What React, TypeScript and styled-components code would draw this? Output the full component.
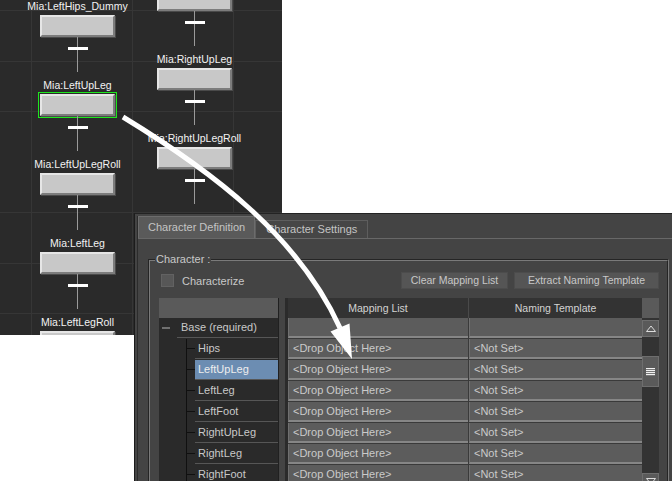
import React from 'react';
import styled, { createGlobalStyle } from 'styled-components';

const GlobalStyle = createGlobalStyle`
  html, body { margin: 0; padding: 0; background: #fff; }
  body { font-family: 'Liberation Sans', Arial, sans-serif; }
`;

type GraphNode = { name?: string; selected?: boolean };

const leftChain: GraphNode[] = [
  { name: 'Mia:LeftHips_Dummy' },
  { name: 'Mia:LeftUpLeg', selected: true },
  { name: 'Mia:LeftUpLegRoll' },
  { name: 'Mia:LeftLeg' },
  { name: 'Mia:LeftLegRoll' },
];

// the first right node's label is above the picture, only its box shows
const rightChain: GraphNode[] = [
  {},
  { name: 'Mia:RightUpLeg' },
  { name: 'Mia:RightUpLegRoll' },
  { name: 'Mia:RightLeg' },
];

const slots = ['Hips', 'LeftUpLeg', 'LeftLeg', 'LeftFoot', 'RightUpLeg', 'RightLeg', 'RightFoot'];
const selectedSlot = 'LeftUpLeg';

const App: React.FC = () => {
  const renderChain = (chain: GraphNode[], left: number, top: number) => (
    <Chain $left={left} $top={top}>
      {chain.map((node, i) => (
        <React.Fragment key={i}>
          {node.name ? <NodeLabel>{node.name}</NodeLabel> : null}
          <NodeBox $selected={!!node.selected} />
          <Stem />
        </React.Fragment>
      ))}
    </Chain>
  );

  return (
    <>
      <GlobalStyle />
      <Stage>
        <Graph>
          {renderChain(leftChain, 40, 0)}
          {renderChain(rightChain, 157, -11)}
        </Graph>

        <Panel>
          <Frame>
            <TabBar>
              <Tab $active>Character Definition</Tab>
              <Tab>Character Settings</Tab>
            </TabBar>
            <Body>
              <Group>
                <Legend>Character :</Legend>
                <TopRow>
                  <Check />
                  <span>Characterize</span>
                  <Spacer />
                  <Button $w={107}>Clear Mapping List</Button>
                  <Button $w={145}>Extract Naming Template</Button>
                </TopRow>
                <MainArea>
                  <Tree>
                    <TreeHead />
                    <TreeRow>
                      <Minus />
                      <TreeLabel $root>Base (required)</TreeLabel>
                    </TreeRow>
                    {slots.map((slot) => (
                      <TreeRow key={slot}>
                        <Branch>
                          <Tick />
                        </Branch>
                        <TreeLabel $selected={slot === selectedSlot}>{slot}</TreeLabel>
                      </TreeRow>
                    ))}
                  </Tree>
                  <Table>
                    <Columns>
                      <HeadRow>
                        <HeadCell>Mapping List</HeadCell>
                        <HeadCell>Naming Template</HeadCell>
                      </HeadRow>
                      <Row>
                        <Cell />
                        <Cell />
                      </Row>
                      {slots.map((slot) => (
                        <Row key={slot}>
                          <Cell>&lt;Drop Object Here&gt;</Cell>
                          <Cell>&lt;Not Set&gt;</Cell>
                        </Row>
                      ))}
                    </Columns>
                    <ScrollBar>
                      <Corner />
                      <ScrollBtn>
                        <svg width="10" height="7" viewBox="0 0 10 7">
                          <polygon points="0.5,6.5 5,1 9.5,6.5" fill="none" stroke="#dcdcdc" strokeWidth="1" />
                        </svg>
                      </ScrollBtn>
                      <Track $h={19} />
                      <Thumb>
                        <svg width="9" height="8" viewBox="0 0 9 8">
                          {[0, 2, 4, 6].map((y) => (
                            <rect key={y} x="0" y={y} width="9" height="1.2" fill="#f0f0f0" />
                          ))}
                        </svg>
                      </Thumb>
                      <Track $h={86} />
                      <ScrollBtn>
                        <svg width="10" height="7" viewBox="0 0 10 7">
                          <polygon points="0.5,0.5 5,6 9.5,0.5" fill="none" stroke="#dcdcdc" strokeWidth="1" />
                        </svg>
                      </ScrollBtn>
                    </ScrollBar>
                  </Table>
                </MainArea>
              </Group>
            </Body>
          </Frame>
        </Panel>

        <Overlay width="672" height="481" viewBox="0 0 672 481">
          <path d="M123 117 C210 170 298 235 340 328" stroke="#fff" strokeWidth="5" fill="none" />
          <polygon points="352,359 349.5,323.5 330.5,331.5" fill="#fff" />
        </Overlay>
      </Stage>
    </>
  );
};

export default App;

const Stage = styled.div`
  position: relative;
  width: 672px;
  height: 481px;
  overflow: hidden;
  background: #fff;
  display: grid;
  grid-template-columns: 134px 148px 390px;
  grid-template-rows: 213px 122px 146px;
`;

const Graph = styled.div`
  grid-column: 1 / 3;
  grid-row: 1 / 3;
  position: relative;
  overflow: hidden;
  background-color: #2a2a2a;
  background-image:
    repeating-linear-gradient(to bottom, transparent 0 10px, #363636 10px 11px, transparent 11px 50.5px),
    repeating-linear-gradient(to right, transparent 0 31px, #363636 31px 32px, transparent 32px 101px);
`;

const Chain = styled.div<{ $left: number; $top: number }>`
  position: absolute;
  left: ${(p) => p.$left}px;
  top: ${(p) => p.$top}px;
  width: 75px;
  display: flex;
  flex-direction: column;
  align-items: center;
`;

const NodeLabel = styled.div`
  height: 13px;
  line-height: 13px;
  margin-bottom: 2px;
  font-size: 10.5px;
  color: #f2f2f2;
  white-space: nowrap;
`;

const NodeBox = styled.div<{ $selected: boolean }>`
  width: 75px;
  height: 22px;
  box-sizing: border-box;
  background: #c8c8c8;
  border: 2px solid;
  border-color: #e6e6e6 #7c7c7c #7c7c7c #e6e6e6;
  box-shadow: 1px 1px 0 #4a4a4a;
  outline: ${(p) => (p.$selected ? '1px solid #1de61d' : 'none')};
  outline-offset: 1px;
`;

const Stem = styled.div`
  width: 75px;
  height: 42px;
  background:
    linear-gradient(#fff, #fff) 28px 10px / 20px 3px no-repeat,
    linear-gradient(#9a9a9a, #9a9a9a) 37px 0 / 1px 35px no-repeat;
`;

const Panel = styled.div`
  grid-column: 2 / 4;
  grid-row: 2 / 4;
  z-index: 1;
  display: flex;
  overflow: hidden;
  background: #444;
  border-top: 1px solid #232323;
  border-left: 1px solid #1c1c1c;
  padding: 2px 0 0 2px;
  font-family: 'Liberation Sans', Arial, sans-serif;
  font-size: 11px;
  color: #c8c8c8;
`;

const Frame = styled.div`
  flex: 1;
  min-width: 0;
  display: flex;
  flex-direction: column;
  border-left: 1px solid #2c2c2c;
`;

const TabBar = styled.div`
  display: flex;
  align-items: flex-end;
  height: 22px;
  border-bottom: 1px solid #686868;
`;

const Tab = styled.div<{ $active?: boolean }>`
  box-sizing: border-box;
  height: ${(p) => (p.$active ? 22 : 18)}px;
  line-height: ${(p) => (p.$active ? 21 : 16)}px;
  padding: 0 ${(p) => (p.$active ? 9 : 10)}px;
  background: ${(p) => (p.$active ? '#5a5a5a' : '#464646')};
  border: 1px solid ${(p) => (p.$active ? '#6c6c6c' : '#5e5e5e')};
  border-bottom: none;
  color: #c4c4c4;
  white-space: nowrap;
`;

const Body = styled.div`
  flex: 1;
  padding: 14px 3px 0 10px;
  display: flex;
  flex-direction: column;
`;

const Group = styled.fieldset`
  flex: 1;
  margin: 0;
  padding: 0;
  min-width: 0;
  border: 2px groove #7a7a7a;
  border-bottom: none;
`;

const Legend = styled.legend`
  margin-left: 5px;
  padding: 0 1px;
  font-size: 11px;
  line-height: 13px;
  color: #c8c8c8;
`;

const TopRow = styled.div`
  margin-top: 6px;
  height: 17px;
  display: flex;
  align-items: center;
  padding: 0 8px 0 11px;
`;

const Check = styled.div`
  width: 13px;
  height: 13px;
  box-sizing: border-box;
  background: #575757;
  border: 1px solid #626262;
  margin-right: 8px;
`;

const Spacer = styled.div`
  flex: 1;
`;

const Button = styled.div<{ $w: number }>`
  width: ${(p) => p.$w}px;
  height: 17px;
  box-sizing: border-box;
  margin-left: 6px;
  background: #555;
  border: 1px solid #4c4c4c;
  font-size: 10.5px;
  line-height: 15px;
  text-align: center;
  color: #c8c8c8;
  white-space: nowrap;
`;

const MainArea = styled.div`
  margin-top: 9px;
  display: flex;
  padding: 0 8px 0 9px;
`;

const Tree = styled.div`
  width: 120px;
  height: 200px;
  box-sizing: border-box;
  margin-right: 6px;
  background: #2a2a2a;
  border-right: 1px solid #202020;
  display: flex;
  flex-direction: column;
`;

const TreeHead = styled.div`
  height: 20px;
  flex-shrink: 0;
  background: #5a5a5a;
`;

const TreeRow = styled.div`
  height: 21px;
  flex-shrink: 0;
  display: flex;
  align-items: flex-start;
  &:last-child > div:first-child {
    height: 200px;
  }
`;

const Minus = styled.div`
  width: 8px;
  height: 2px;
  margin: 9px 7px 0 3px;
  background: #707070;
`;

const Branch = styled.div`
  align-self: stretch;
  width: 8px;
  margin-left: 27px;
  border-left: 1px solid #101010;
  display: flex;
  align-items: flex-start;
`;

const Tick = styled.div`
  width: 8px;
  height: 1px;
  margin-top: 9px;
  background: #101010;
`;

const TreeLabel = styled.div<{ $root?: boolean; $selected?: boolean }>`
  flex: 1;
  height: 19px;
  line-height: 19px;
  padding-left: ${(p) => (p.$root ? 4 : 3)}px;
  border-bottom: 1px solid #565656;
  background: ${(p) => (p.$selected ? '#6c8db2' : 'transparent')};
  color: ${(p) => (p.$selected ? '#eeeeee' : '#c8c8c8')};
  white-space: nowrap;
`;

const Table = styled.div`
  width: 374px;
  height: 200px;
  box-sizing: border-box;
  border-left: 3px solid #2b2b2b;
  background: #3a3a3a;
  display: flex;
`;

const Columns = styled.div`
  width: 354px;
  display: flex;
  flex-direction: column;
`;

const HeadRow = styled.div`
  display: grid;
  grid-template-columns: 180px 173px;
  column-gap: 1px;
  background: #4a4a4a;
`;

const HeadCell = styled.div`
  height: 20px;
  line-height: 20px;
  background: #333;
  text-align: center;
  font-size: 10.5px;
  color: #d2d2d2;
`;

const Row = styled.div`
  display: grid;
  grid-template-columns: 180px 173px;
  column-gap: 1px;
  margin-bottom: 1px;
`;

const Cell = styled.div`
  height: 20px;
  box-sizing: border-box;
  line-height: 18px;
  padding-left: 4px;
  background: #5c5c5c;
  border-left: 1px solid #707070;
  border-bottom: 2px solid #868686;
  color: #cacaca;
  white-space: nowrap;
`;

const ScrollBar = styled.div`
  width: 17px;
  background: #333;
  display: flex;
  flex-direction: column;
`;

const Corner = styled.div`
  height: 20px;
  flex-shrink: 0;
  margin-bottom: 2px;
  background: #5a5a5a;
`;

const ScrollBtn = styled.div`
  height: 17px;
  flex-shrink: 0;
  box-sizing: border-box;
  background: #5a5a5a;
  border: 1px solid #6e6e6e;
  display: flex;
  align-items: center;
  justify-content: center;
`;

const Track = styled.div<{ $h: number }>`
  height: ${(p) => p.$h}px;
  flex-shrink: 0;
`;

const Thumb = styled(ScrollBtn)`
  height: 31px;
`;

const Overlay = styled.svg`
  position: absolute;
  left: 0;
  top: 0;
  z-index: 2;
  pointer-events: none;
`;
